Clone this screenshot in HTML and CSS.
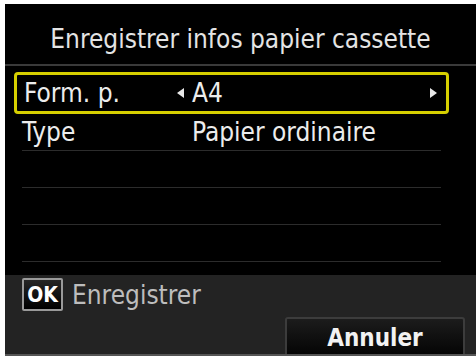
FILE: index.html
```html
<!DOCTYPE html>
<html lang="fr">
<head>
    <meta charset="UTF-8">
    <meta name="viewport" content="width=device-width, initial-scale=1.0">
    <title>Enregistrer infos papier cassette</title>
    <link rel="stylesheet" href="styles.css">
</head>
<body>
    <div class="screen">
        <div class="title">Enregistrer infos papier cassette</div>
        <div class="list">
            <div class="row selected">
                <span class="label">Form. p.</span>
                <span class="value">
                    <svg class="arrow left" width="7" height="10" viewBox="0 0 7 10"><path d="M7 0 L0 5 L7 10 Z"/></svg>A4
                </span>
                <svg class="arrow" width="7" height="10" viewBox="0 0 7 10"><path d="M0 0 L7 5 L0 10 Z"/></svg>
            </div>
            <div class="row">
                <span class="label">Type</span>
                <span class="value">Papier ordinaire</span>
            </div>
            <div class="row"></div>
            <div class="row"></div>
            <div class="row"></div>
        </div>
        <div class="footer">
            <div class="ok-line">
                <span class="ok-key">OK</span>
                <span class="ok-text">Enregistrer</span>
            </div>
            <div class="actions">
                <button class="cancel">Annuler</button>
            </div>
        </div>
    </div>
</body>
</html>
```

FILE: styles.css
```css
body {
    margin: 0;
    background-color: #fff;
    font-family: "DejaVu Sans Condensed", Roboto, "Liberation Sans", sans-serif;
}
.screen {
    margin: 4px 0 0 5px;
    width: 471px;
    height: 352px;
    background-color: #000;
    display: flex;
    flex-direction: column;
}
.title {
    box-sizing: border-box;
    height: 62px;
    padding-top: 10px;
    display: flex;
    align-items: center;
    justify-content: center;
    color: #e4e4e4;
    font-size: 26px;
    border-bottom: 2px solid #3a3a3a;
}
.list {
    margin: 6px 0 0 9px;
    width: 435px;
}
.row {
    height: 36px;
    margin: 0 8px;
    border-bottom: 1px solid #2c2c2c;
    display: flex;
    align-items: center;
    color: #ececec;
    font-size: 26px;
}
.row.selected {
    height: 36px;
    margin: 0;
    padding: 0 9px 0 7px;
    border: 3px solid #d6cf00;
    border-radius: 4px;
}
.label {
    width: 170px;
}
.row.selected .label {
    width: 168px;
}
.value {
    flex: 1;
    display: flex;
    align-items: center;
}
.arrow {
    fill: #e8e8e8;
}
.arrow.left {
    margin-left: -15px;
    margin-right: 8px;
}
.footer {
    margin-top: 13px;
    flex: 1;
    background-color: #232323;
    border-bottom: 2px solid #555;
    display: flex;
    flex-direction: column;
}
.ok-line {
    display: flex;
    align-items: center;
    padding: 2px 0 0 17px;
    height: 35px;
}
.ok-key {
    box-sizing: border-box;
    width: 41px;
    height: 33px;
    border: 2px solid #9a9a9a;
    border-radius: 2px;
    background: linear-gradient(#262626, #000);
    color: #fff;
    font-weight: bold;
    font-size: 21px;
    display: flex;
    align-items: center;
    justify-content: center;
}
.ok-text {
    margin-left: 9px;
    color: #bdbdbd;
    font-size: 26px;
}
.actions {
    display: flex;
    justify-content: flex-end;
    margin-top: auto;
    padding-right: 11px;
}
.cancel {
    width: 180px;
    height: 37px;
    border: 2px solid #3c3c3c;
    border-bottom: none;
    border-radius: 3px 3px 0 0;
    background: linear-gradient(#1c1c1c, #050505);
    color: #f2f2f2;
    font-family: inherit;
    font-size: 24px;
    font-weight: bold;
    padding: 2px 0 0;
}
```
